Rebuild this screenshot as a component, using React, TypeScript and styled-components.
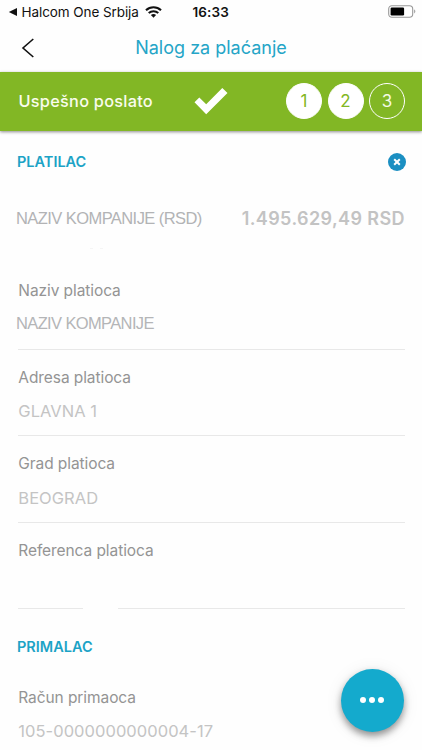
import React from "react";
import styled, { createGlobalStyle } from "styled-components";

const GlobalStyle = createGlobalStyle`
  * { box-sizing: border-box; }
  html, body { margin: 0; padding: 0; background: #fefefe; }
  body { font-family: Inter, Roboto, sans-serif; overflow: hidden; }
`;

const Screen = styled.main`
  position: relative;
  width: 422px;
  height: 750px;
  overflow: hidden;
  background: #fefefe;
`;

const StatusBar = styled.div`
  display: grid;
  grid-template-columns: 1fr auto 1fr;
  align-items: center;
  height: 24px;
  padding: 0 6.5px;
  color: #111;
  font-size: 13.5px;
  line-height: 24px;
`;

const BackToApp = styled.div`
  display: flex;
  align-items: center;
  white-space: nowrap;
  svg { flex: none; }
`;

const AppName = styled.span`
  margin: 0 6px 0 4px;
  letter-spacing: -0.08px;
`;

const Clock = styled.time`
  margin-right: 0.6px;
  font-weight: 600;
  letter-spacing: 0.15px;
`;

const BatterySlot = styled.div`
  display: flex;
  justify-content: flex-end;
  margin-top: -1.5px;
`;

const Header = styled.header`
  display: grid;
  grid-template-columns: 56px 1fr 56px;
  align-items: center;
  height: 48px;
`;

const BackButton = styled.button`
  display: flex;
  padding: 0 0 0 20px;
  border: 0;
  background: none;
`;

const Title = styled.h1`
  margin: 0;
  text-align: center;
  color: #25a5c7;
  font-size: 18px;
  font-weight: 400;
  line-height: 48px;
  white-space: nowrap;
`;

const Banner = styled.section`
  display: flex;
  align-items: center;
  height: 58.5px;
  padding: 0 17px 0 18.5px;
  background: #82b725;
  color: #fff;
  box-shadow: 0 1px 3px rgba(0, 0, 0, 0.45);
`;

const BannerText = styled.span`
  width: 175.5px;
  color: #f9fcec;
  font-size: 16.3px;
  font-weight: 500;
  letter-spacing: 0.27px;
  white-space: nowrap;
`;

const Steps = styled.div`
  display: flex;
  gap: 5.5px;
  margin-left: auto;
`;

const Step = styled.span<{ $done?: boolean }>`
  display: flex;
  align-items: center;
  justify-content: center;
  width: 36px;
  height: 36px;
  border: 1px solid #fff;
  border-radius: 50%;
  background: ${(p) => (p.$done ? "#fff" : "transparent")};
  color: ${(p) => (p.$done ? "#82b725" : "#f4fae4")};
  font-size: 17px;
`;

const SectionHead = styled.div<{ $top: number }>`
  display: flex;
  align-items: center;
  justify-content: space-between;
  height: 20px;
  margin: ${(p) => p.$top}px 16px 0 17px;
`;

const SectionTitle = styled.h2`
  margin: 0;
  color: #1ca3c6;
  font-size: 14.5px;
  font-weight: 600;
`;

const Account = styled.div`
  display: flex;
  align-items: center;
  justify-content: space-between;
  height: 24px;
  margin: 35px 17px 0 16px;
  white-space: nowrap;
`;

const AccountName = styled.span`
  color: #b2b3b5;
  font-family: "Liberation Sans", Arial, sans-serif;
  font-size: 16.5px;
  letter-spacing: -0.57px;
`;

const Balance = styled.strong`
  color: #c3c3c3;
  font-size: 18px;
  font-weight: 600;
  letter-spacing: 0.4px;
`;

const Remnant = styled.div`
  display: flex;
  gap: 7px;
  height: 1px;
  margin: 17px 0 15px 90px;
  span { width: 3px; background: #f5f5f5; }
`;

const Field = styled.div`
  display: flex;
  flex-direction: column;
  height: 86.5px;
  margin: 0 17px 0 18px;
  padding-top: 17.5px;
  white-space: nowrap;
`;

const Label = styled.span`
  padding-left: 0.3px;
  color: #949494;
  font-size: 15.5px;
  letter-spacing: -0.08px;
  line-height: 20px;
`;

const Value = styled.span<{ $company?: boolean }>`
  margin: ${(p) => (p.$company ? "11.5px 0 0 -2px" : "13.5px 0 0 0.3px")};
  color: ${(p) => (p.$company ? "#b4b5b7" : "#c4c4c4")};
  font-family: ${(p) => (p.$company ? '"Liberation Sans", Arial' : "Inter, Roboto")}, sans-serif;
  font-size: 16.5px;
  letter-spacing: ${(p) => (p.$company ? "-0.63px" : "0.04px")};
  line-height: 20px;
`;

const Rule = styled.div`
  display: flex;
  gap: 35px;
  margin-top: auto;
  padding-bottom: 0.5px;
  span { height: 1px; background: #e8e8e8; flex: 1; }
`;

const ShortSegment = styled.i`
  width: 65px;
  height: 1px;
  background: #e8e8e8;
`;

const RecipientFields = styled.div`
  padding-top: 13.5px;
`;

const MoreButton = styled.button`
  position: absolute;
  left: 340.5px;
  top: 668.5px;
  display: flex;
  align-items: center;
  justify-content: center;
  gap: 3px;
  width: 63px;
  height: 63px;
  padding: 0;
  border: 0;
  border-radius: 50%;
  background: #14aacd;
  box-shadow: 0 4px 7px rgba(0, 0, 0, 0.4), 0 2px 18px rgba(0, 0, 0, 0.08);
  span { width: 6px; height: 6px; border-radius: 50%; background: #fff; }
`;

const Wifi = () => (
  <svg width="17" height="12" viewBox="0 0 17 12" fill="none" stroke="#111">
    <path d="M1 4.2C5.2.2 11.8.2 16 4.2" strokeWidth="2.1" />
    <path d="M3.7 7c2.7-2.5 6.9-2.5 9.6 0" strokeWidth="2" />
    <path d="M8.5 11.8 5.9 9.1c1.4-1.4 3.8-1.4 5.2 0Z" fill="#111" stroke="none" />
  </svg>
);

const Battery = () => (
  <svg width="28" height="13" viewBox="0 0 28 13">
    <rect x="0.7" y="0.7" width="24" height="11.6" rx="3.2" fill="#fff" stroke="#999" strokeWidth="1.1" />
    <rect x="2.6" y="2.5" width="13.5" height="8" rx="1.2" fill="#000" />
    <path d="M26 4.6c1.8.4 1.8 3.4 0 3.8Z" fill="#aaa" />
  </svg>
);

const fields = [
  { label: "Naziv platioca", value: "NAZIV KOMPANIJE", company: true },
  { label: "Adresa platioca", value: "GLAVNA 1" },
  { label: "Grad platioca", value: "BEOGRAD" },
  { label: "Referenca platioca", value: "", split: true },
];

export default function App() {
  return (
    <Screen>
      <GlobalStyle />
      <StatusBar>
        <BackToApp>
          <svg width="11" height="10" viewBox="0 0 11 10"><path d="M1.8 5 10 1v8Z" fill="#111" /></svg>
          <AppName>Halcom One Srbija</AppName>
          <Wifi />
        </BackToApp>
        <Clock>16:33</Clock>
        <BatterySlot><Battery /></BatterySlot>
      </StatusBar>
      <Header>
        <BackButton aria-label="Nazad">
          <svg width="14" height="20" viewBox="0 0 14 20" fill="none" stroke="#111" strokeWidth="1.6">
            <path d="M13.3 1 3 10l10.3 9" />
          </svg>
        </BackButton>
        <Title>Nalog za plaćanje</Title>
      </Header>
      <Banner>
        <BannerText>Uspešno poslato</BannerText>
        <svg width="34" height="28" viewBox="0 0 34 28">
          <path d="M.5 15.2 5.3 10.4 12.2 17.3 28.3 1 33.5 6 12.2 27.2Z" fill="#fff" />
        </svg>
        <Steps>
          <Step $done>1</Step>
          <Step $done>2</Step>
          <Step>3</Step>
        </Steps>
      </Banner>
      <SectionHead $top={21}>
        <SectionTitle>PLATILAC</SectionTitle>
        <svg width="18" height="18" viewBox="0 0 18 18">
          <circle cx="9" cy="9" r="9" fill="#1b8fc2" />
          <path d="m6.2 6.2 5.6 5.6m0-5.6-5.6 5.6" stroke="#fff" strokeWidth="2" />
        </svg>
      </SectionHead>
      <Account>
        <AccountName>NAZIV KOMPANIJE (RSD)</AccountName>
        <Balance>1.495.629,49 RSD</Balance>
      </Account>
      <Remnant><span /><span /></Remnant>
      {fields.map((f) => (
        <Field key={f.label}>
          <Label>{f.label}</Label>
          {f.value && <Value $company={f.company}>{f.value}</Value>}
          <Rule>{f.split && <ShortSegment />}<span /></Rule>
        </Field>
      ))}
      <SectionHead $top={27}>
        <SectionTitle>PRIMALAC</SectionTitle>
      </SectionHead>
      <RecipientFields>
        <Field>
          <Label>Račun primaoca</Label>
          <Value>105-0000000000004-17</Value>
        </Field>
      </RecipientFields>
      <MoreButton aria-label="Više"><span /><span /><span /></MoreButton>
    </Screen>
  );
}
